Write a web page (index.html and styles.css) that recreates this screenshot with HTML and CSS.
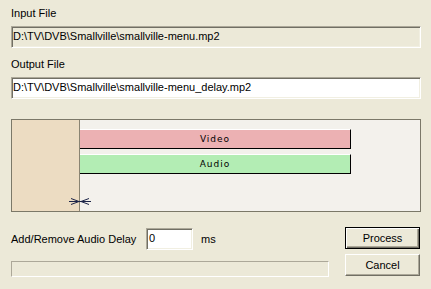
FILE: index.html
```html
<!DOCTYPE html>
<html lang="en">

<head>
  <meta charset="UTF-8">
  <title>Audio Delay</title>
  <link rel="stylesheet" href="styles.css">
</head>

<body>
  <div class="dialog">
    <div class="field-label">Input File</div>
    <div class="edit readonly">D:\TV\DVB\Smallville\smallville-menu.mp2</div>

    <div class="field-label second">Output File</div>
    <div class="edit">D:\TV\DVB\Smallville\smallville-menu_delay.mp2</div>

    <!-- Timeline of the two streams -->
    <div class="timeline">
      <div class="offset-area"></div>
      <div class="tracks">
        <div class="track video">Video</div>
        <div class="track audio">Audio</div>
      </div>
      <svg class="marker" width="22" height="9" viewBox="0 0 22 9">
        <path d="M0 4.5H22M2 1.5L10 4.5L2 7.5M20 1.5L12 4.5L20 7.5" stroke="#1c2447" stroke-width="1" fill="none" />
      </svg>
    </div>

    <div class="bottom">
      <div class="bottom-left">
        <div class="delay-row">
          <span class="delay-label">Add/Remove Audio Delay</span>
          <div class="edit delay-input">0</div>
          <span class="unit">ms</span>
        </div>
        <div class="progress"></div>
      </div>
      <div class="buttons">
        <button class="btn default">Process</button>
        <button class="btn">Cancel</button>
      </div>
    </div>
  </div>
</body>

</html>
```

FILE: styles.css
```css
/* General */
body {
  margin: 0;
  background-color: #ece9d8;
  font-family: 'Liberation Sans', Arial, sans-serif;
  font-size: 11px;
  color: #000;
}

.dialog {
  width: 410px;
  padding: 7px 10px 0 11px;
}

.field-label {
  line-height: 13px;
  height: 13px;
  margin-bottom: 6px;
}

.field-label.second {
  margin-top: 10px;
}

/* Sunken edit boxes */
.edit {
  box-sizing: border-box;
  height: 22px;
  line-height: 18px;
  padding-left: 1px;
  background-color: #fff;
  border: 1px solid;
  border-color: #aca899 #fff #fff #aca899;
  box-shadow: inset 1px 1px #716f64, inset -1px -1px #f1efe2;
  white-space: nowrap;
  overflow: hidden;
}

.edit.readonly {
  background-color: #ece9d8;
}

/* Timeline */
.timeline {
  position: relative;
  box-sizing: border-box;
  margin-top: 20px;
  height: 93px;
  border: 1px solid #7b7868;
  background-color: #f3f1ec;
  display: flex;
}

.offset-area {
  width: 67px;
  background-color: #ecdcc2;
  border-right: 1px solid #8a8472;
}

.tracks {
  padding-top: 9px;
  display: flex;
  flex-direction: column;
  gap: 5px;
}

.track {
  box-sizing: border-box;
  width: 271px;
  height: 20px;
  border-top: 1px solid #fff;
  border-bottom: 1px solid #000;
  border-right: 1px solid #000;
  text-align: center;
  line-height: 18px;
  font-family: 'DejaVu Sans', sans-serif;
  font-size: 9px;
  letter-spacing: 1px;
}

.video {
  background-color: #ecb1b3;
}

.audio {
  background-color: #b3edb4;
}

.marker {
  position: absolute;
  left: 57px;
  top: 77px;
}

/* Bottom area */
.bottom {
  margin-top: 15px;
  display: flex;
  justify-content: space-between;
}

.bottom-left {
  width: 318px;
}

.delay-row {
  display: flex;
  align-items: center;
  height: 22px;
  margin-top: 1px;
}

.delay-label {
  width: 135px;
}

.delay-input {
  width: 47px;
  padding-left: 2px;
}

.unit {
  margin-left: 8px;
}

.progress {
  box-sizing: border-box;
  margin-top: 11px;
  height: 16px;
  border: 1px solid;
  border-color: #aca899 #fff #fff #aca899;
}

.buttons {
  display: flex;
  flex-direction: column;
  gap: 5px;
  margin-right: 1px;
}

.btn {
  box-sizing: border-box;
  width: 75px;
  height: 22px;
  padding: 0;
  font-family: 'Liberation Sans', Arial, sans-serif;
  font-size: 11px;
  color: #000;
  background-color: #ece9d8;
  border: 1px solid;
  border-color: #fff #716f64 #716f64 #fff;
  box-shadow: inset -1px -1px #aca899;
}

.btn.default {
  border-color: #000;
  box-shadow: inset 1px 1px #fff, inset -1px -1px #716f64, inset -2px -2px #aca899;
}
```
